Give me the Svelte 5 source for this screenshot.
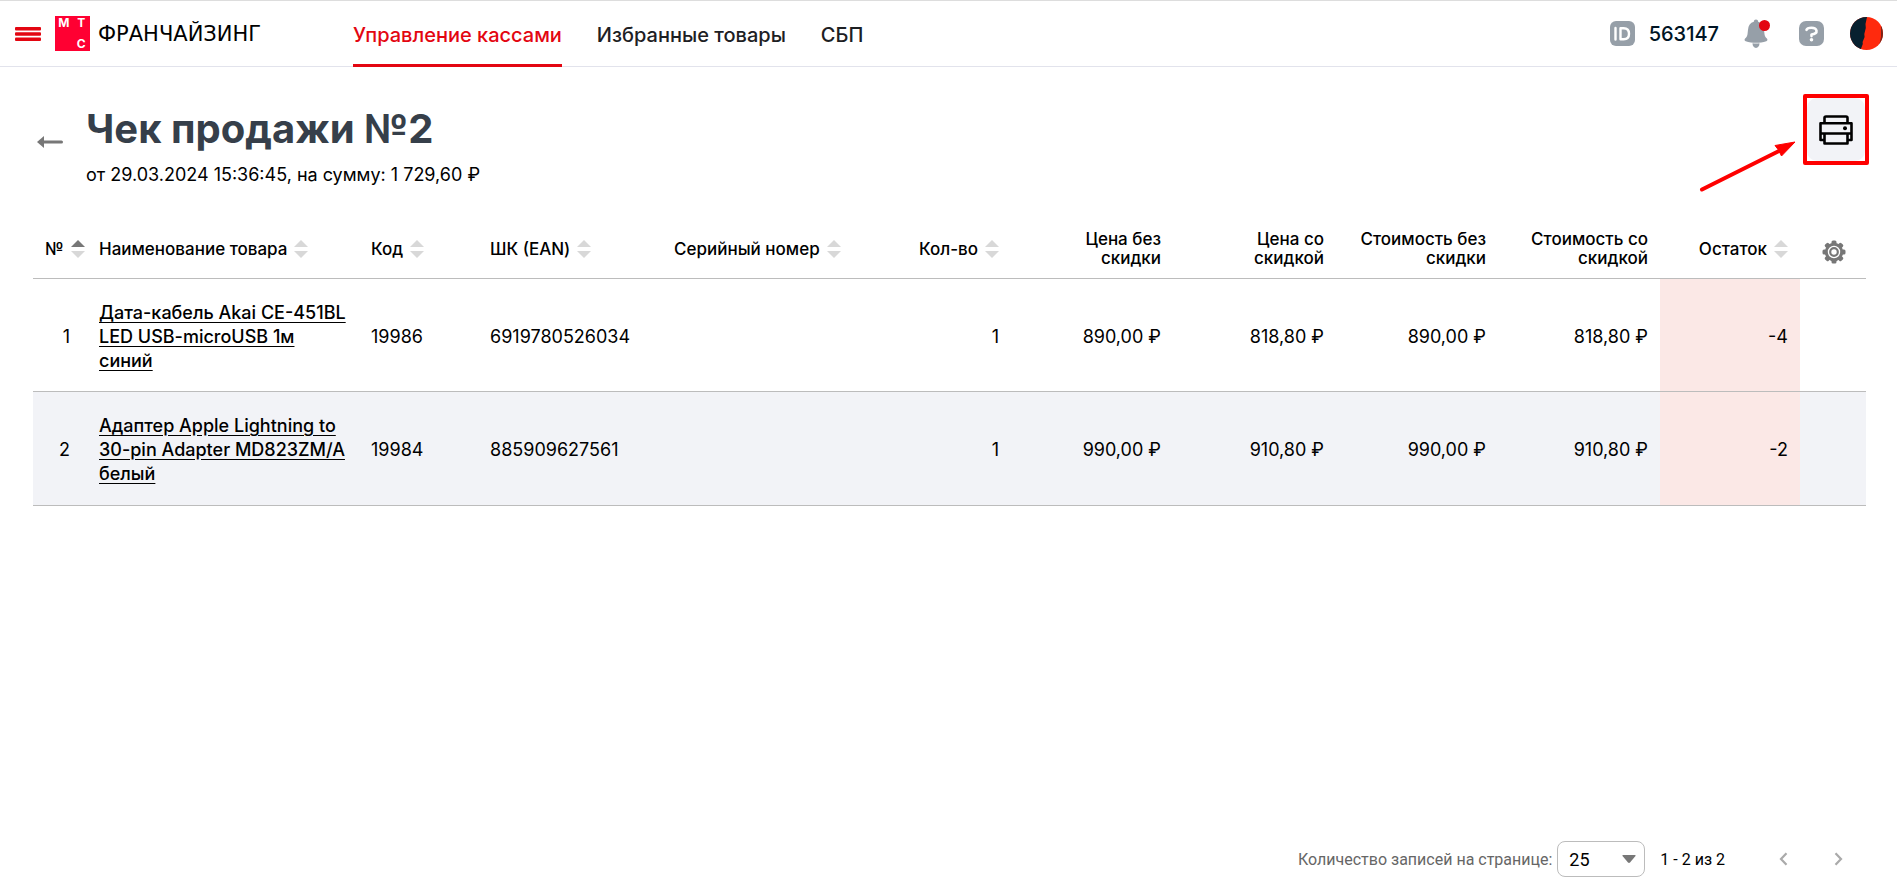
<script>
  const nav = [
    { label: 'Управление кассами', active: true },
    { label: 'Избранные товары' },
    { label: 'СБП' }
  ];

  const columns = [
    { key: 'num', label: '№', width: 54, sort: 'asc', cls: 'num' },
    { key: 'name', label: 'Наименование товара', width: 272, sort: 'none', cls: '' },
    { key: 'code', label: 'Код', width: 119, sort: 'none', cls: '' },
    { key: 'ean', label: 'ШК (EAN)', width: 184, sort: 'none', cls: '' },
    { key: 'serial', label: 'Серийный номер', width: 210, sort: 'none', cls: '' },
    { key: 'qty', label: 'Кол-во', width: 139, sort: 'none', cls: 'right' },
    { key: 'price', label: 'Цена без\nскидки', width: 162, cls: 'right' },
    { key: 'priceSale', label: 'Цена со\nскидкой', width: 163, cls: 'right' },
    { key: 'sum', label: 'Стоимость без\nскидки', width: 162, cls: 'right' },
    { key: 'sumSale', label: 'Стоимость со\nскидкой', width: 162, cls: 'right' },
    { key: 'rest', label: 'Остаток', width: 140, sort: 'none', cls: 'right' }
  ];

  const rows = [
    {
      num: 1,
      name: 'Дата-кабель Akai CE-451BL\nLED USB-microUSB 1м\nсиний',
      code: '19986',
      ean: '6919780526034',
      serial: '',
      qty: 1,
      price: '890,00 ₽',
      priceSale: '818,80 ₽',
      sum: '890,00 ₽',
      sumSale: '818,80 ₽',
      rest: -4
    },
    {
      num: 2,
      name: 'Адаптер Apple Lightning to\n30-pin Adapter MD823ZM/A\nбелый',
      code: '19984',
      ean: '885909627561',
      serial: '',
      qty: 1,
      price: '990,00 ₽',
      priceSale: '910,80 ₽',
      sum: '990,00 ₽',
      sumSale: '910,80 ₽',
      rest: -2
    }
  ];

  const teeth = [0, 45, 90, 135, 180, 225, 270, 315];

  let pageSize = $state('25');
</script>

<div class="page">
  <header class="topbar">
    <button class="icon-btn burger" aria-label="Меню">
      <svg width="26" height="14" viewBox="0 0 26 14" fill="#e30611">
        <rect width="26" height="3.4" rx="1" />
        <rect y="5.3" width="26" height="3.4" rx="1" />
        <rect y="10.6" width="26" height="3.4" rx="1" />
      </svg>
    </button>
    <a class="logo" href="#home">
      <span class="logo-mark"><span>М</span><span>Т</span><span class="c">С</span></span>
      <span class="logo-text">ФРАНЧАЙЗИНГ</span>
    </a>
    <nav class="nav">
      {#each nav as item}
        <a href="#nav" class:active={item.active}>{item.label}</a>
      {/each}
    </nav>
    <div class="user">
      <svg class="id-icon" width="25" height="25" viewBox="0 0 25 25">
        <rect width="25" height="25" rx="6" fill="#969fa8" />
        <path d="M5.5 7v11.5M10.5 7.2h3.2q5.3 0 5.3 5.5t-5.3 5.5h-3.2z" fill="none" stroke="#fff" stroke-width="2.4" stroke-linecap="round" stroke-linejoin="round" />
      </svg>
      <span class="user-id">563147</span>
      <button class="icon-btn bell" aria-label="Уведомления">
        <svg width="26" height="29" viewBox="0 0 26 29">
          <path d="M12 .5c1.3 0 2 .9 2.2 2.2 3.6 1 5.4 3.8 5.8 8l.5 4.5c.2 2 1.2 3.1 2.400 4.300.9 1 .7 2.300-.6 2.700-6.600 2-14 2-20.600 0-1.300-.4-1.500-1.700-.6-2.700 1.200-1.200 2.200-2.300 2.400-4.300l.5-4.500c.4-4.200 2.200-7 5.800-8C10 1.400 10.700.5 12 .5zM8.500 24.300q3.500.4 7 0c0 2.700-1.400 4.700-3.500 4.700s-3.500-2-3.500-4.700z" fill="#969fa8" />
          <circle cx="20.5" cy="6.5" r="5.5" fill="#e30611" />
        </svg>
      </button>
      <button class="icon-btn help" aria-label="Помощь">
        <svg width="25" height="25" viewBox="0 0 25 25">
          <rect width="25" height="25" rx="7" fill="#969fa8" />
          <path d="M7.5 8.8q.6-2 5-2t5 2.9-5 3.800v1.600" fill="none" stroke="#fff" stroke-width="2.6" stroke-linecap="round" stroke-linejoin="round" />
          <circle cx="12.5" cy="18.8" r="1.8" fill="#fff" />
        </svg>
      </button>
      <button class="icon-btn" aria-label="Профиль">
        <svg width="33" height="33" viewBox="0 0 33 33">
          <clipPath id="avatar"><circle cx="16.5" cy="16.5" r="16.5" /></clipPath>
          <g clip-path="url(#avatar)">
            <rect width="33" height="33" fill="#ff2a0d" />
            <path d="M0 0h17l-1.500 7 .3 4-1.500 6 .3 3-2 5 .2 2-2.300 6H0z" fill="#07202f" />
            <path d="M31 8l2 3v14l-4 4 2-9z" fill="#7a2418" />
          </g>
        </svg>
      </button>
    </div>
  </header>

  <main class="content">
    <div class="heading">
      <button class="icon-btn back" aria-label="Назад">
        <svg width="26" height="12" viewBox="0 0 26 12">
          <path d="M0 6l7-6v12z" fill="#777" />
          <path d="M6 6h18.5" stroke="#777" stroke-width="3" stroke-linecap="round" />
        </svg>
      </button>
      <div class="titles">
        <h1>Чек продажи №2</h1>
        <p>от 29.03.2024 15:36:45, на сумму: 1 729,60 ₽</p>
      </div>
      <div class="print-frame">
        <button class="icon-btn print" aria-label="Печать">
          <svg width="34" height="30" viewBox="0 0 34 30" fill="none" stroke="#000" stroke-width="2.6" stroke-linejoin="round">
            <path d="M5.5 8V3q0-1.500 1.500-1.500h20q1.500 0 1.500 1.500v5" />
            <path d="M5.5 25H1.500V8.300h31V25h-4" />
            <path d="M1 18.500h32M5.500 18.500v10h23v-10" />
            <circle cx="26" cy="13.2" r="2" fill="#000" stroke="none" />
          </svg>
        </button>
        <svg class="pointer" width="100" height="56" viewBox="0 0 100 56">
          <path d="M5 51.500L82 13" stroke="#fe0000" stroke-width="4" stroke-linecap="round" />
          <path d="M98 4L78 7.500l3.500 4.500 3 6z" fill="#fe0000" stroke="#fe0000" />
        </svg>
      </div>
    </div>

    <table>
      <colgroup>
        {#each columns as col}
          <col style="width: {col.width}px" />
        {/each}
        <col class="tools" />
      </colgroup>
      <thead>
        <tr>
          {#each columns as col}
            <th class={col.cls}>
              {#if col.sort}
                <button class="sort">
                  {col.label}
                  <svg width="14" height="18" viewBox="0 0 14 18">
                    <path d="M7 0l7 7H0z" fill={col.sort === 'asc' ? '#777' : '#d8d8d8'} />
                    <path d="M7 18l7-7H0z" fill="#d8d8d8" />
                  </svg>
                </button>
              {:else}
                {col.label}
              {/if}
            </th>
          {/each}
          <th class="tools-cell">
            <button class="icon-btn gear" aria-label="Настройка столбцов">
              <svg width="24" height="24" viewBox="0 0 24 24">
                {#each teeth as angle}
                  <rect x="9.5" y="0.5" width="5" height="6" rx="1.5" fill="#777" transform="rotate({angle} 12 12)" />
                {/each}
                <circle cx="12" cy="12" r="7.7" fill="#fff" stroke="#777" stroke-width="3" />
                <circle cx="12" cy="12" r="3.8" fill="none" stroke="#777" stroke-width="2.2" />
              </svg>
            </button>
          </th>
        </tr>
      </thead>
      <tbody>
        {#each rows as row}
          <tr>
            {#each columns as col}
              <td class={col.cls} class:negative={col.key === 'rest' && row.rest < 0}>
                {#if col.key === 'name'}
                  <a href="#item">{row.name}</a>
                {:else}
                  {row[col.key]}
                {/if}
              </td>
            {/each}
            <td></td>
          </tr>
        {/each}
      </tbody>
    </table>
  </main>

  <footer class="pager">
    <label for="page-size">Количество записей на странице:</label>
    <div class="select">
      <select id="page-size" bind:value={pageSize}>
        <option>25</option>
        <option>50</option>
        <option>100</option>
      </select>
      <svg width="14" height="8" viewBox="0 0 14 8"><path d="M1 0h12q1 0 .5 1L8 7.500q-1 .8-2 0L.5 1Q0 0 1 0z" fill="#777" /></svg>
    </div>
    <span class="range">1 - 2 из 2</span>
    <button class="icon-btn arrow" aria-label="Предыдущая страница">
      <svg width="9" height="14" viewBox="0 0 9 14"><path d="M7.5 1.200L2 7l5.500 5.800" fill="none" stroke="#aaa" stroke-width="2.2" /></svg>
    </button>
    <button class="icon-btn arrow" aria-label="Следующая страница">
      <svg width="9" height="14" viewBox="0 0 9 14"><path d="M1.5 1.200L7 7l-5.500 5.800" fill="none" stroke="#aaa" stroke-width="2.2" /></svg>
    </button>
  </footer>
</div>

<style>
  :global(body) {
    margin: 0;
    background: #fff;
  }

  .page {
    display: flex;
    flex-direction: column;
    box-sizing: border-box;
    min-height: 100vh;
    border-top: 1px solid #ddd;
    font-family: Inter, Roboto, sans-serif;
    font-size: 18px;
    color: #000;
  }

  button {
    padding: 0;
    border: 0;
    background: none;
    font: inherit;
    color: inherit;
    cursor: pointer;
  }

  .icon-btn {
    display: flex;
    align-items: center;
    justify-content: center;
    flex: none;
  }

  svg {
    display: block;
    flex: none;
  }

  .topbar {
    display: flex;
    align-items: center;
    height: 65px;
    padding: 0 14px 0 15px;
    border-bottom: 1px solid #e2e3ec;
  }

  .logo {
    display: flex;
    align-items: center;
    gap: 8px;
    width: 298px;
    margin-left: 14px;
    color: #000;
    text-decoration: none;
  }

  .logo-mark {
    display: grid;
    grid-template-columns: 1fr 1fr;
    align-content: space-between;
    justify-items: center;
    box-sizing: border-box;
    width: 35px;
    height: 35px;
    padding: 1px 0;
    background: #ff0032;
    color: #fff;
    font-size: 12px;
    font-weight: 700;
    line-height: 12px;
  }

  .logo-mark .c {
    grid-column: 2;
  }

  .logo-text {
    font-family: "DejaVu Sans", sans-serif;
    font-size: 21px;
    line-height: 24px;
  }

  .nav {
    display: flex;
    align-self: stretch;
    gap: 35px;
    flex: 1;
  }

  .nav a {
    display: flex;
    align-items: center;
    box-sizing: border-box;
    height: 66px;
    padding-top: 4px;
    border-bottom: 3px solid transparent;
    font-size: 20px;
    font-weight: 500;
    color: #1d2023;
    text-decoration: none;
    white-space: nowrap;
  }

  .nav a.active {
    color: #e30611;
    border-color: #e30611;
  }

  .user {
    display: flex;
    align-items: center;
  }

  .user-id {
    margin: 0 25px 0 14px;
    font-size: 20px;
    font-weight: 500;
    color: #001424;
  }

  .help {
    margin: 0 26px 0 29px;
  }

  .content {
    flex: 1;
    padding: 27px 31px 0 33px;
  }

  .heading {
    display: flex;
    align-items: flex-start;
    height: 126px;
  }

  .back {
    width: 26px;
    height: 24px;
    margin: 36px 23px 0 4px;
  }

  .titles {
    flex: 1;
    padding-top: 11px;
  }

  h1 {
    margin: 0;
    font-size: 40px;
    font-weight: 700;
    line-height: 48px;
    color: #363f4a;
  }

  p {
    margin: 10px 0 0;
    line-height: 24px;
  }

  .print-frame {
    position: relative;
    box-sizing: border-box;
    width: 66px;
    height: 71px;
    margin-right: -3px;
    border: 4px solid #fe0000;
    border-radius: 2px;
  }

  .print {
    width: 100%;
    height: 100%;
    border-radius: 10px;
    background: #f2f3f7;
  }

  .pointer {
    position: absolute;
    top: 40px;
    right: 68px;
  }

  table {
    width: 100%;
    table-layout: fixed;
    border-spacing: 0;
  }

  .tools {
    width: 66px;
  }

  th,
  td {
    box-sizing: border-box;
    padding: 0 12px;
    border-bottom: 1px solid #bcbcbc;
    text-align: left;
    white-space: nowrap;
  }

  th {
    height: 59px;
    font-size: 17px;
    font-weight: 500;
    line-height: 19px;
    white-space: pre-line;
  }

  td {
    height: 113px;
    padding-top: 3px;
    line-height: 24px;
  }

  tbody tr:nth-child(even) {
    background: #f2f3f7;
  }

  tbody tr:nth-child(even) td {
    height: 114px;
  }

  .right {
    text-align: right;
  }

  td.num {
    padding-right: 17px;
    text-align: right;
  }

  th.num {
    padding-right: 0;
  }

  .sort {
    display: inline-flex;
    align-items: center;
    gap: 7px;
    white-space: nowrap;
  }

  td a {
    font-weight: 500;
    color: #000;
    text-underline-offset: 3px;
    white-space: pre;
  }

  .negative {
    background: #fbe8e6;
  }

  .tools-cell {
    padding: 6px 0 0 22px;
  }

  .pager {
    display: flex;
    align-items: center;
    justify-content: flex-end;
    padding: 0 47px 14px;
    font-family: Roboto, sans-serif;
    font-size: 16px;
  }

  .pager label {
    margin-right: 5px;
    color: #666;
  }

  .select {
    position: relative;
    width: 88px;
  }

  select {
    appearance: none;
    box-sizing: border-box;
    width: 100%;
    height: 36px;
    padding: 0 11px;
    border: 1px solid #bcbcbc;
    border-radius: 8px;
    background: #fff;
    font: inherit;
    font-size: 18px;
    color: #000;
  }

  .select svg {
    position: absolute;
    top: 14px;
    right: 9px;
    pointer-events: none;
  }

  .range {
    margin: 0 46px 0 15px;
  }

  .arrow {
    width: 24px;
    height: 24px;
  }

  .arrow + .arrow {
    margin-left: 31px;
  }
</style>
